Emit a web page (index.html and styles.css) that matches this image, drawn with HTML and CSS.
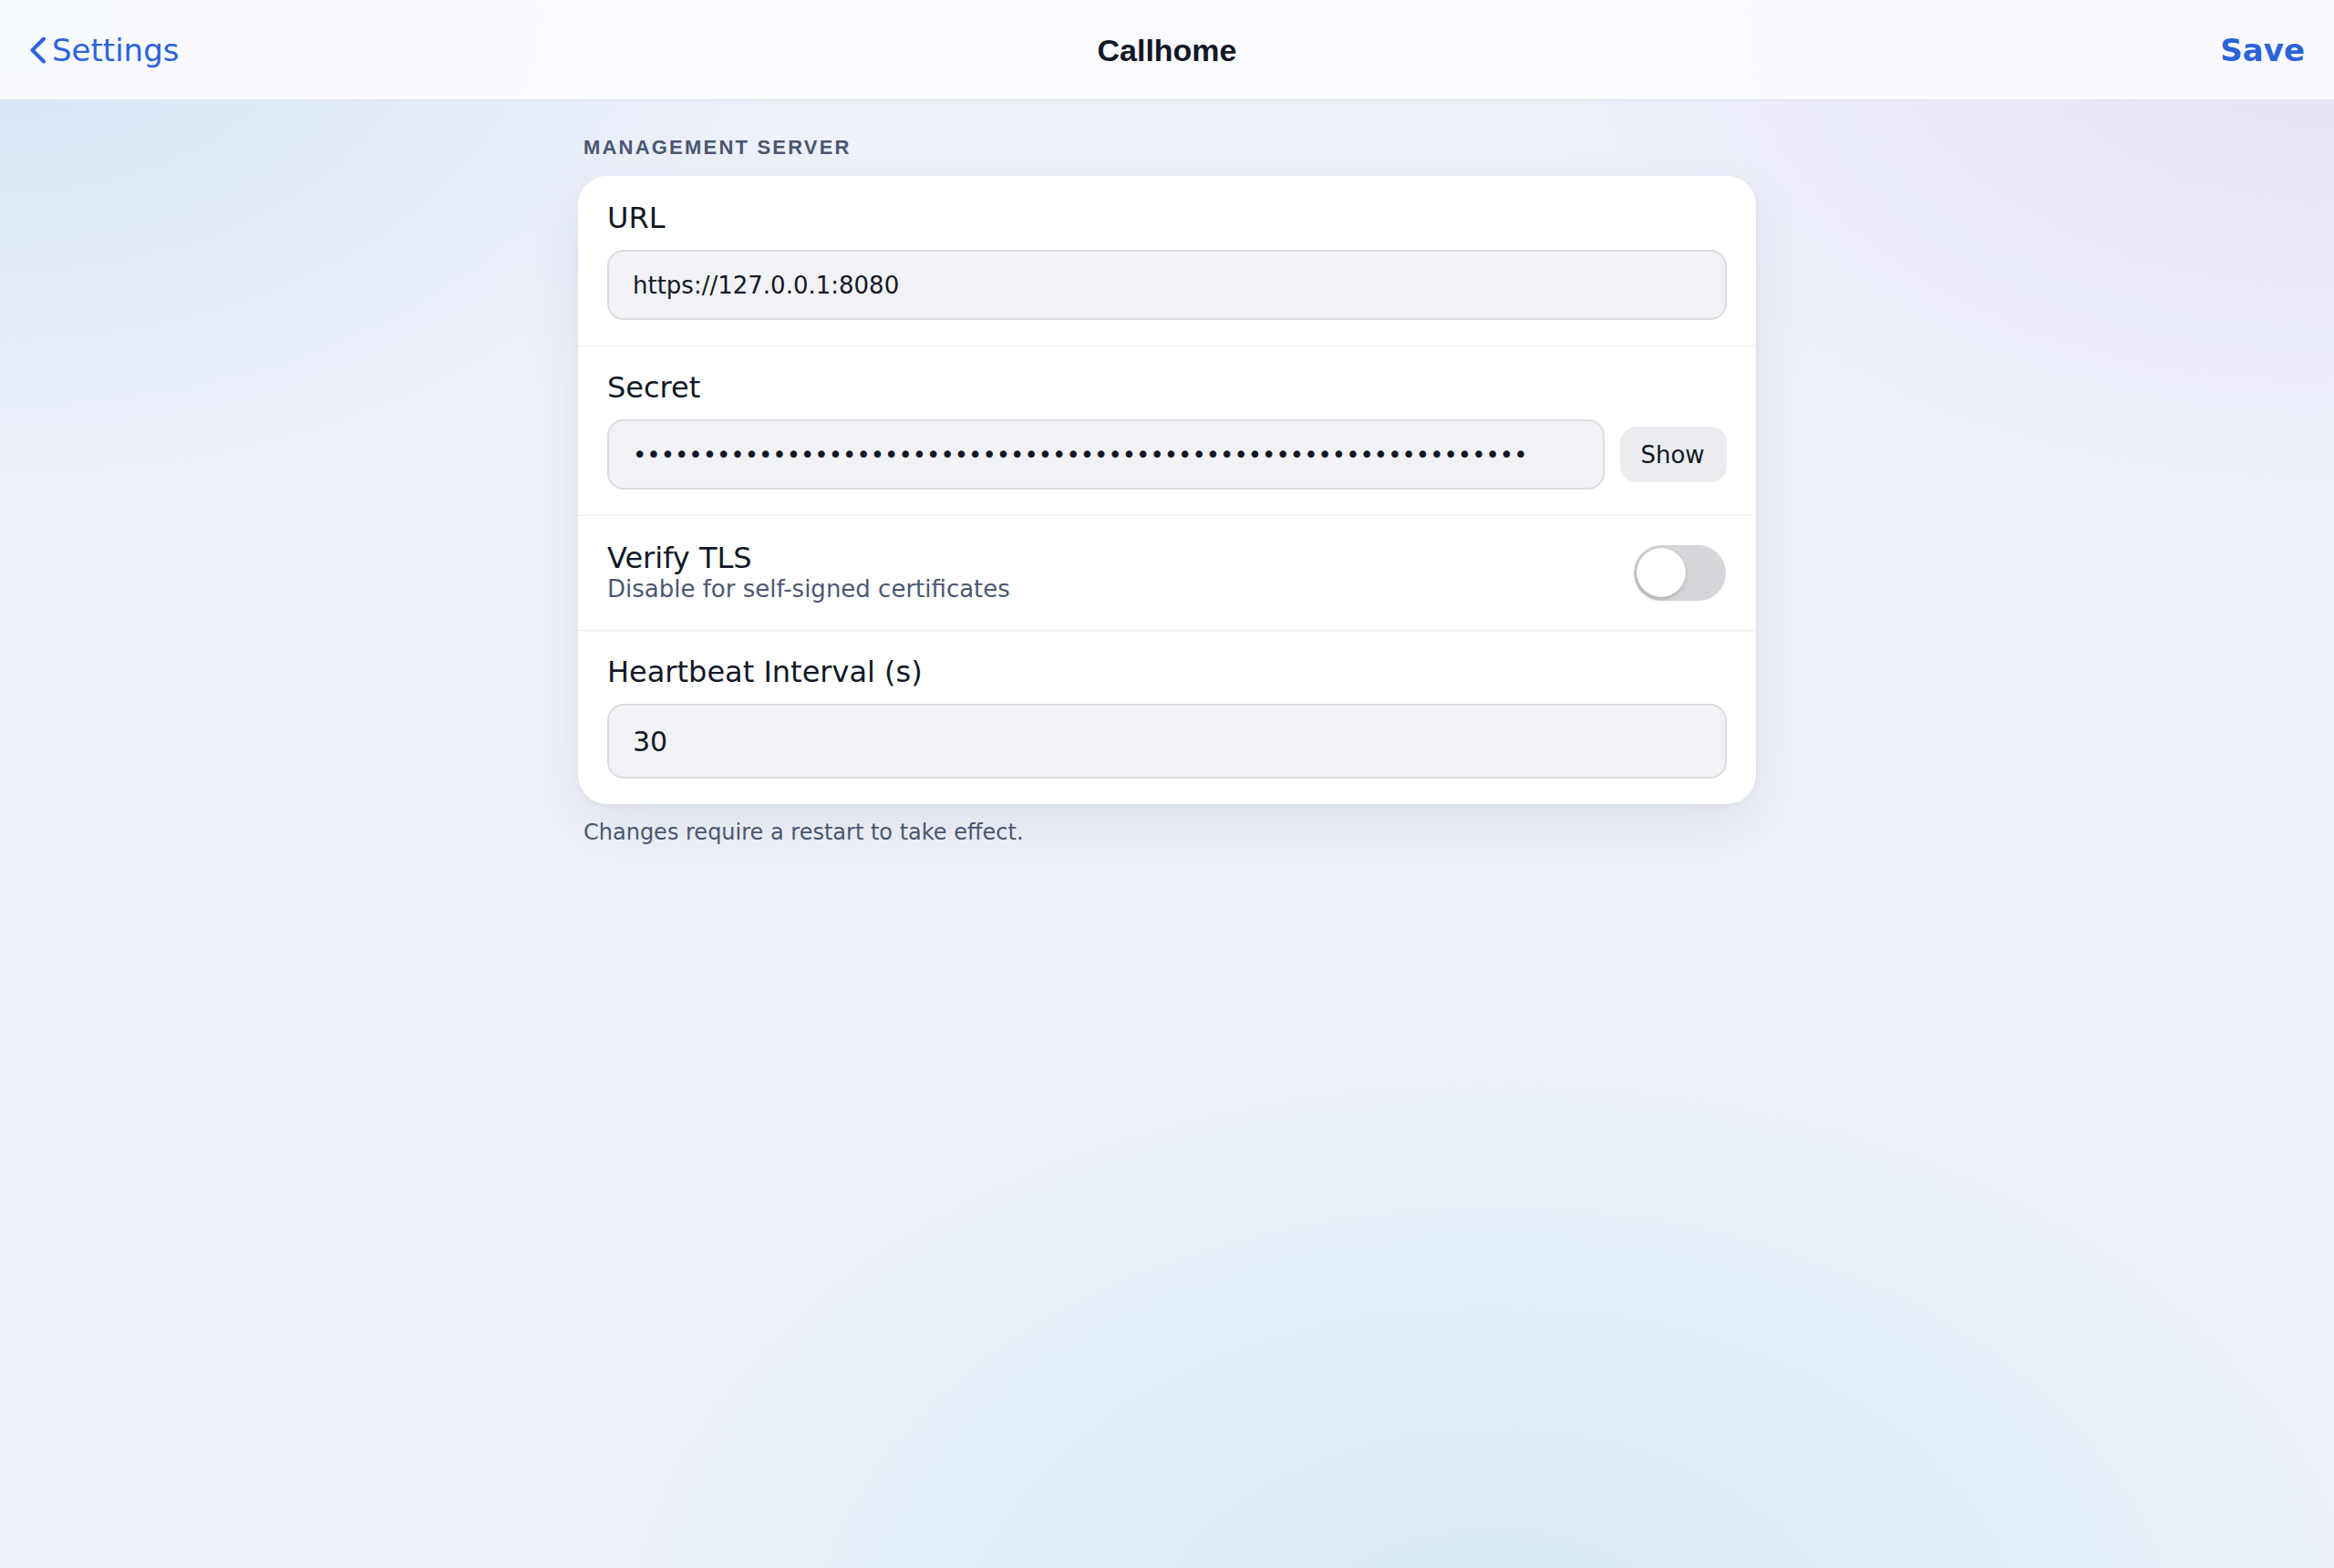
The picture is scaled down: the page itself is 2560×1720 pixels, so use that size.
FILE: index.html
```html
<!DOCTYPE html>
<html lang="en">
<head>
<meta charset="utf-8">
<title>Callhome</title>
<link rel="stylesheet" href="styles.css">
</head>
<body>
<header class="navbar">
  <a class="nav-back" href="#">
    <svg class="chevron" width="20" height="30" viewBox="0 0 20 30" aria-hidden="true">
      <polyline points="16,2.5 3.5,15 16,27.5" fill="none" stroke="currentColor" stroke-width="4" stroke-linecap="round" stroke-linejoin="round"/>
    </svg>
    <span>Settings</span>
  </a>
  <h1 class="nav-title">Callhome</h1>
  <button class="nav-save" type="button">Save</button>
</header>

<main class="content">
  <h2 class="section-label">MANAGEMENT SERVER</h2>
  <section class="card">
    <div class="row">
      <label class="field-label" for="url">URL</label>
      <input class="field-input" id="url" type="text" value="https://127.0.0.1:8080">
    </div>
    <div class="row">
      <label class="field-label" for="secret">Secret</label>
      <div class="secret-line">
        <input class="field-input secret-input" id="secret" type="password" value="0123456789abcdef0123456789abcdef0123456789abcdef0123456789abcdef">
        <button class="show-btn" type="button">Show</button>
      </div>
    </div>
    <div class="row row-toggle">
      <div class="toggle-text">
        <div class="field-label">Verify TLS</div>
        <div class="field-sub">Disable for self-signed certificates</div>
      </div>
      <div class="switch" role="switch" aria-checked="false"><span class="knob"></span></div>
    </div>
    <div class="row">
      <label class="field-label" for="hb">Heartbeat Interval (s)</label>
      <input class="field-input field-input-lg" id="hb" type="text" value="30">
    </div>
  </section>
  <p class="footnote">Changes require a restart to take effect.</p>
</main>
</body>
</html>
```

FILE: styles.css
```css
html, body {
  margin: 0;
  padding: 0;
}

body {
  min-height: 1720px;
  font-family: "DejaVu Sans", sans-serif;
  color: #111827;
  background:
    radial-gradient(ellipse 1250px 800px at 0% 0%, rgba(212, 226, 248, 0.95), rgba(212, 226, 248, 0) 72%),
    radial-gradient(ellipse 1250px 800px at 100% 0%, rgba(228, 223, 248, 0.95), rgba(228, 223, 248, 0) 72%),
    radial-gradient(ellipse 1500px 1000px at 64% 106%, rgba(210, 234, 244, 0.95), rgba(210, 234, 244, 0) 70%),
    #eef1f8;
}

.navbar {
  height: 110px;
  box-sizing: border-box;
  display: grid;
  grid-template-columns: 1fr auto 1fr;
  align-items: center;
  padding: 0 32px;
  background: rgba(251, 252, 255, 0.9);
  border-bottom: 1px solid #e1e3ea;
}

.nav-back {
  justify-self: start;
  display: flex;
  align-items: center;
  gap: 5px;
  color: #2b63d9;
  text-decoration: none;
  font-size: 34px;
  line-height: 40px;
}

.chevron {
  display: block;
  margin-top: 1px;
}

.nav-title {
  margin: 0;
  font-family: "Liberation Sans", Arial, sans-serif;
  font-size: 34px;
  font-weight: 700;
  line-height: 40px;
  color: #111827;
}

.nav-save {
  justify-self: end;
  border: 0;
  background: none;
  padding: 0;
  font-family: "DejaVu Sans", sans-serif;
  font-weight: 700;
  font-size: 34px;
  line-height: 40px;
  color: #2b63d9;
}

.content {
  width: 1292px;
  margin: 0 auto;
  padding-top: 39px;
}

.section-label {
  margin: 0 0 18px;
  padding-left: 6px;
  font-family: "Liberation Sans", Arial, sans-serif;
  font-size: 22px;
  font-weight: 700;
  line-height: 26px;
  letter-spacing: 0.1em;
  color: #4a5671;
}

.card {
  background: rgba(255, 255, 255, 0.96);
  border-radius: 32px;
  box-shadow: 0 24px 64px rgba(40, 55, 95, 0.08), 0 2px 6px rgba(40, 55, 95, 0.04);
  overflow: hidden;
}

.row {
  display: flex;
  flex-direction: column;
  gap: 16px;
  padding: 26px 32px 28px;
  border-top: 1px solid #ebedf1;
}

.row:first-child {
  border-top: 0;
  padding-top: 27px;
}

.field-label {
  font-size: 32px;
  line-height: 38px;
  color: #111827;
}

.field-input {
  box-sizing: border-box;
  width: 100%;
  height: 77px;
  margin: 0;
  padding: 0 26px;
  border: 2px solid #dcdde3;
  border-radius: 18px;
  background: #f1f2f5;
  font-family: "DejaVu Sans", sans-serif;
  font-size: 26px;
  color: #111827;
  outline: none;
}

.field-input-lg {
  height: 82px;
  font-size: 30px;
}

.secret-line {
  display: flex;
  align-items: center;
  gap: 17px;
}

.secret-input {
  flex: 1;
  min-width: 0;
}

.show-btn {
  flex: none;
  width: 117px;
  height: 61px;
  border: 0;
  border-radius: 18px;
  background: #ebecf0;
  font-family: "DejaVu Sans", sans-serif;
  font-size: 26px;
  color: #111827;
  padding: 0 2px 0 0;
}

.row-toggle {
  flex-direction: row;
  align-items: center;
  justify-content: space-between;
  padding: 27px 33px 30px 32px;
}

.toggle-text {
  display: flex;
  flex-direction: column;
}

.field-sub {
  font-size: 26px;
  line-height: 30px;
  color: #4b5874;
}

.switch {
  position: relative;
  width: 101px;
  height: 61px;
  margin-top: 2px;
  border-radius: 31px;
  background: #d5d5da;
}

.knob {
  position: absolute;
  left: 3px;
  top: 3.5px;
  width: 54px;
  height: 54px;
  border-radius: 50%;
  background: #ffffff;
  box-shadow: -1px 2px 5px rgba(0, 0, 0, 0.22), 0 0 1px rgba(0, 0, 0, 0.15);
}

.footnote {
  margin: 17px 0 0;
  padding-left: 6px;
  font-size: 24px;
  line-height: 28px;
  color: #4a5671;
}
```
